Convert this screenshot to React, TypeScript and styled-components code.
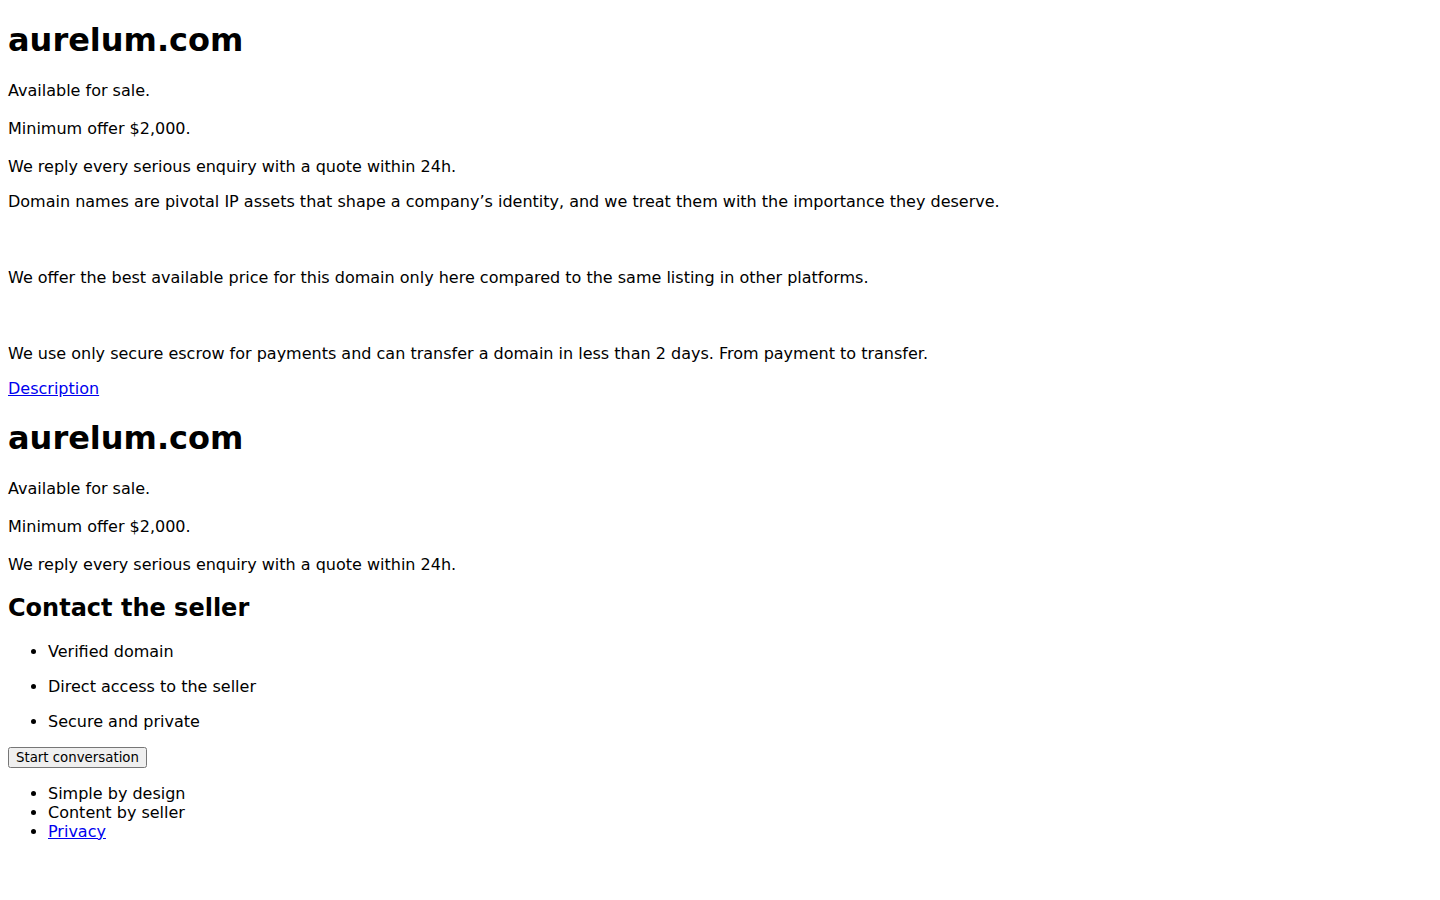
import React from 'react';
import styled, { createGlobalStyle } from 'styled-components';

const GlobalStyle = createGlobalStyle`
  body {
    margin: 0;
    background: #ffffff;
    color: #000000;
    font-family: "DejaVu Sans", sans-serif;
    font-size: 16px;
  }
`;

const Page = styled.main`
  display: flow-root;
  padding: 8px;
`;

const Section = styled.section`
  display: block;
`;

const Title = styled.h1<{ $first?: boolean }>`
  margin: ${({ $first }) => ($first ? '13.44px' : '21.44px')} 0 20.5px;
  font-size: 32px;
  font-weight: 700;
`;

const Fact = styled.p`
  margin: 16px 0 14px;
  line-height: 22px;
`;

const Pitch = styled.p`
  margin: 14px 0 16px;

  & + & {
    margin-top: 57px;
  }
`;

const NavLink = styled.a`
  color: #0000ee;
  text-decoration: underline;
`;

const Nav = styled.nav`
  display: block;
`;

const Subtitle = styled.h2`
  margin: 18px 0 19.92px;
  font-size: 24px;
  font-weight: 700;
`;

const Perks = styled.ul`
  margin: 16px 0;
  padding-left: 40px;

  li p {
    margin: 16px 0;
  }
`;

const Action = styled.div`
  display: block;
`;

const StartButton = styled.button`
  font-family: "DejaVu Sans", sans-serif;
  font-size: 13.333px;
`;

const FooterList = styled.ul`
  margin: 16px 0;
  padding-left: 40px;
`;

const facts = [
  'Available for sale.',
  'Minimum offer $2,000.',
  'We reply every serious enquiry with a quote within 24h.',
];

const pitches = [
  'Domain names are pivotal IP assets that shape a company’s identity, and we treat them with the importance they deserve.',
  'We offer the best available price for this domain only here compared to the same listing in other platforms.',
  'We use only secure escrow for payments and can transfer a domain in less than 2 days. From payment to transfer.',
];

const perks = ['Verified domain', 'Direct access to the seller', 'Secure and private'];

export default function App() {
  return (
    <Page>
      <GlobalStyle />
      <Section>
        <Title $first>aurelum.com</Title>
        {facts.map((f) => (
          <Fact key={f}>{f}</Fact>
        ))}
        {pitches.map((p) => (
          <Pitch key={p}>{p}</Pitch>
        ))}
        <Nav>
          <NavLink href="#description">Description</NavLink>
        </Nav>
      </Section>

      <Section>
        <Title>aurelum.com</Title>
        {facts.map((f) => (
          <Fact key={f}>{f}</Fact>
        ))}
        <Subtitle>Contact the seller</Subtitle>
        <Perks>
          {perks.map((p) => (
            <li key={p}>
              <p>{p}</p>
            </li>
          ))}
        </Perks>
        <Action>
          <StartButton type="button">Start conversation</StartButton>
        </Action>
        <FooterList>
          <li>Simple by design</li>
          <li>Content by seller</li>
          <li>
            <NavLink href="#privacy">Privacy</NavLink>
          </li>
        </FooterList>
      </Section>
    </Page>
  );
}
